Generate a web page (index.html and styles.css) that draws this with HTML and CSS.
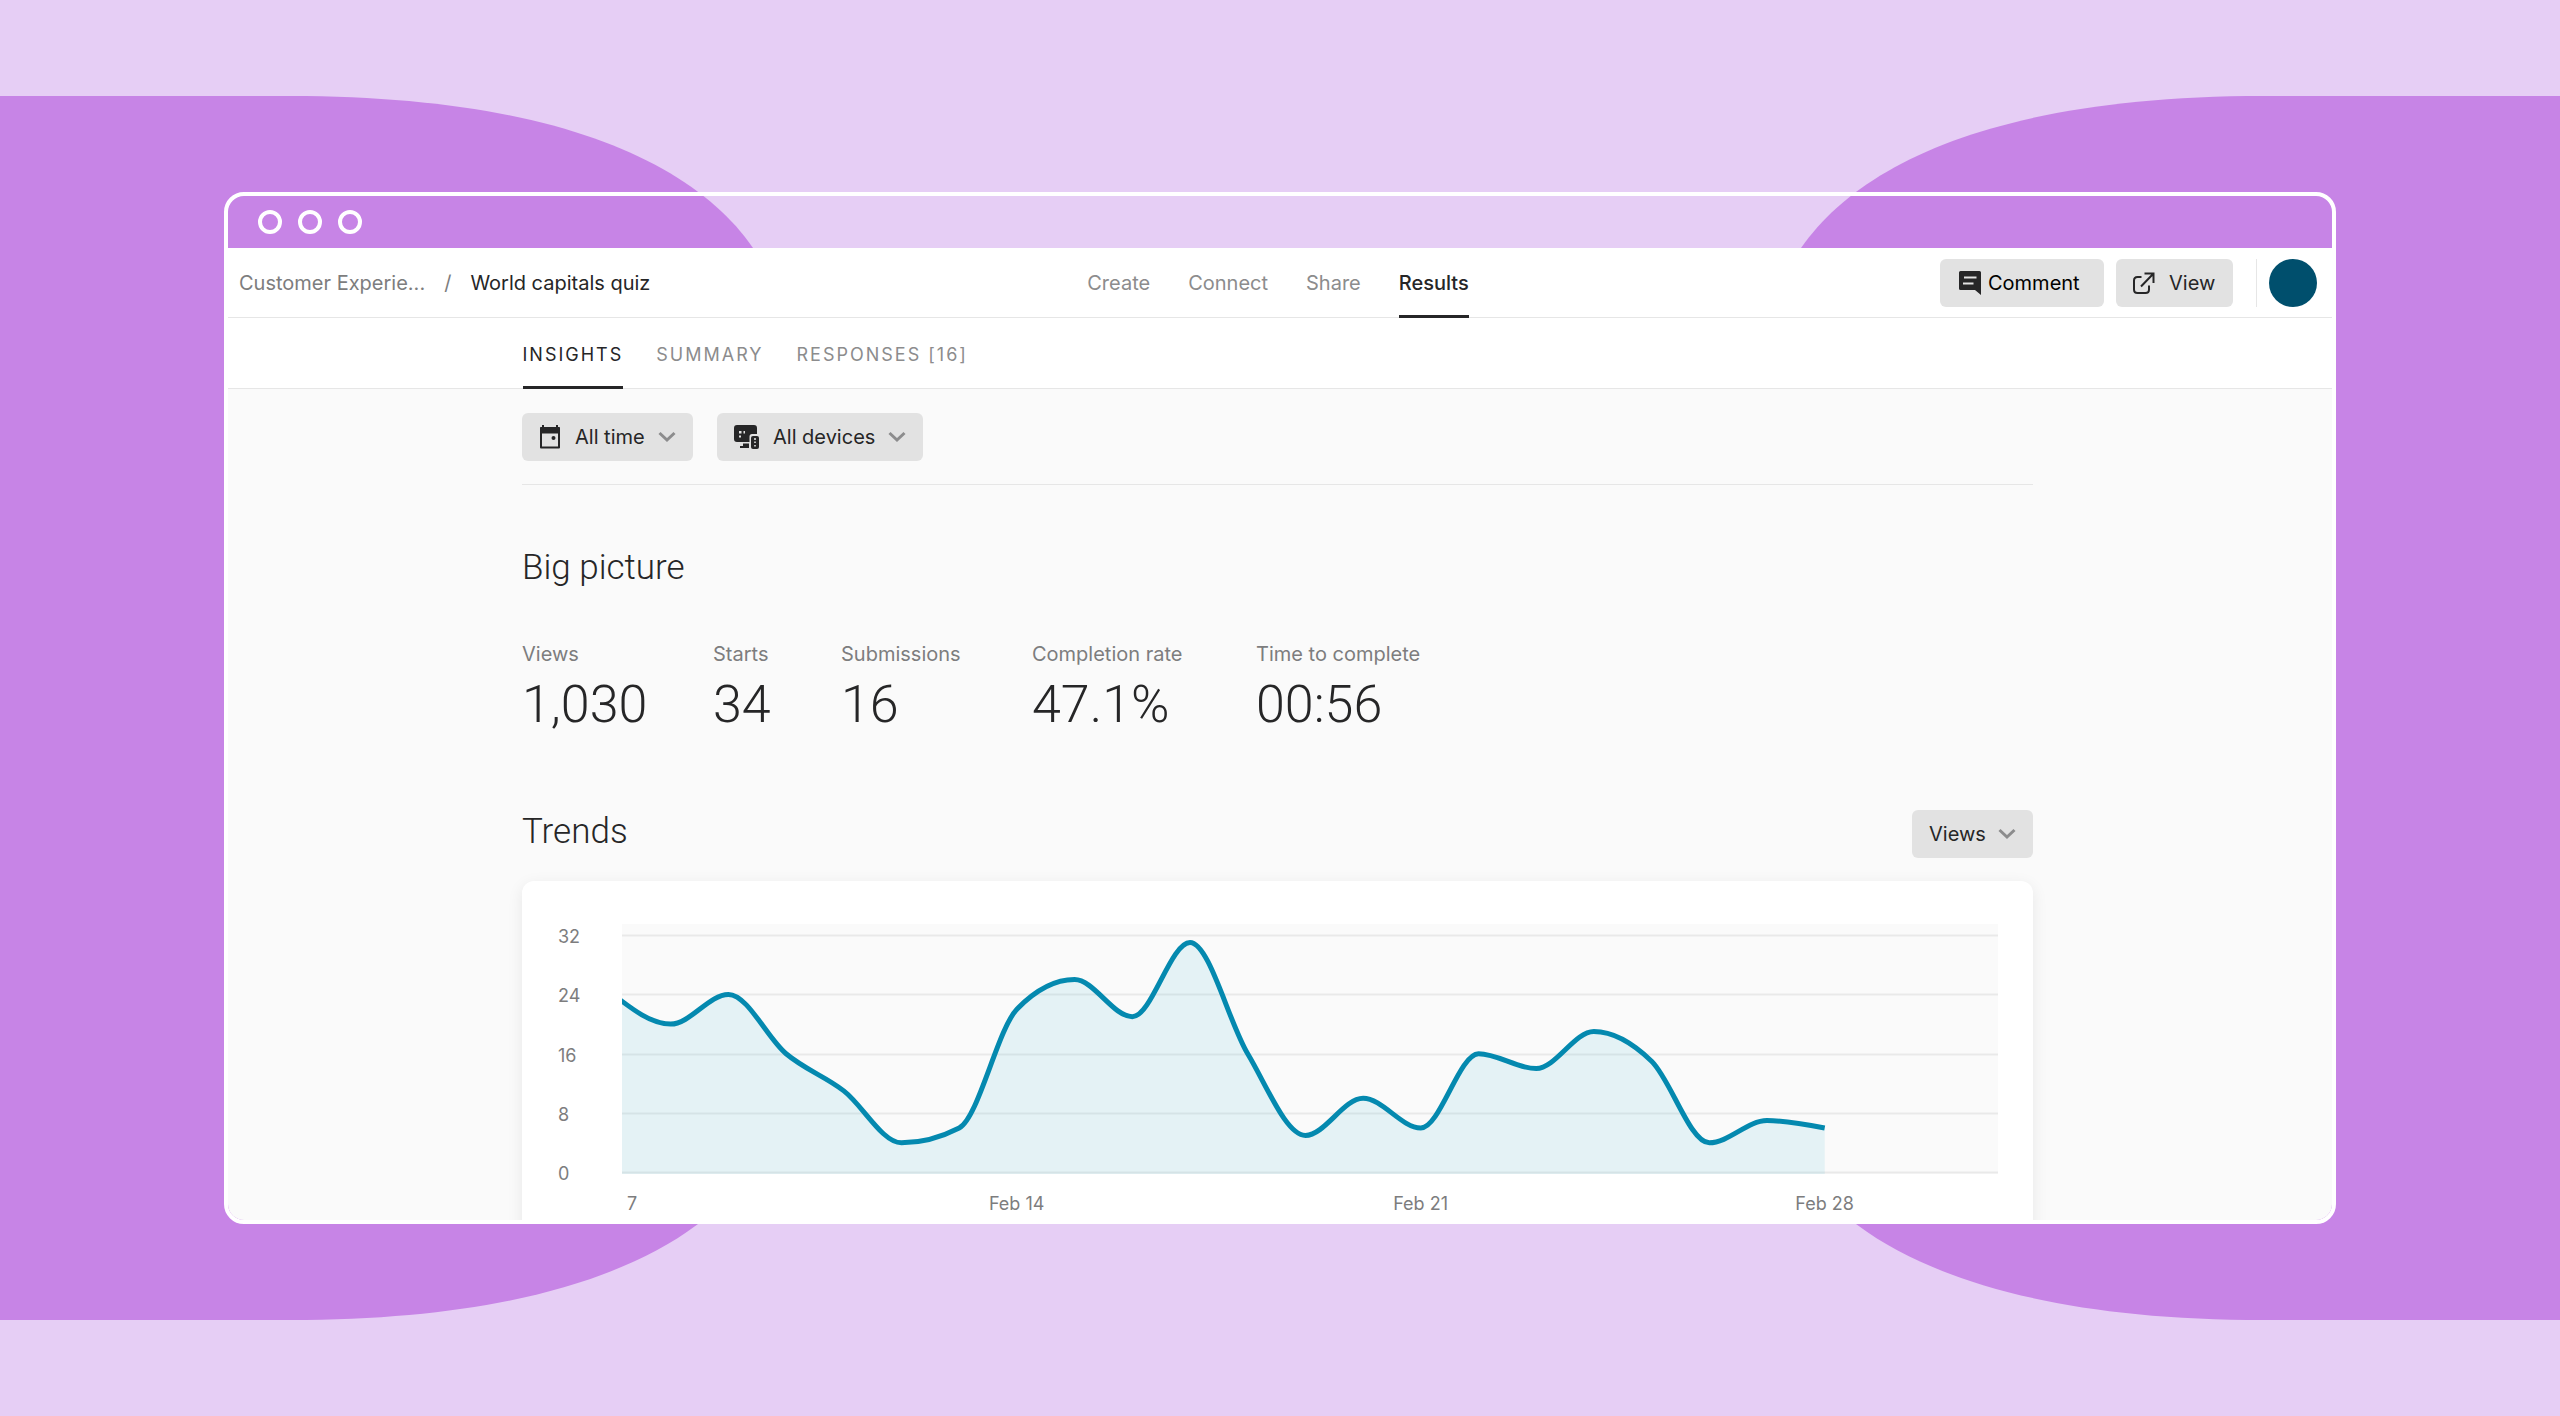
FILE: index.html
```html
<!DOCTYPE html>
<html lang="en">
<head>
<meta charset="utf-8">
<title>World capitals quiz – Results</title>
<link rel="stylesheet" href="styles.css">
</head>
<body>
<div class="stage">
  <svg class="backdrop" viewBox="0 0 2560 1416" preserveAspectRatio="none" aria-hidden="true">
    <path d="M0 96H290C551 96 693 161 753 248C930 505 930 911 753 1168C693 1255 551 1320 290 1320H0Z"/>
    <path d="M2560 96H2264C2003 96 1861 161 1801 248C1624 505 1624 911 1801 1168C1861 1255 2003 1320 2264 1320H2560Z"/>
  </svg>

  <div class="window">
    <div class="titlebar"><i class="dot"></i><i class="dot"></i><i class="dot"></i></div>

    <header class="header">
      <div class="crumbs">
        <a class="crumb" href="#workspace">Customer Experie...</a>
        <span class="slash">/</span>
        <a class="crumb crumb-current" href="#form">World capitals quiz</a>
      </div>
      <nav class="nav">
        <a href="#create">Create</a>
        <a href="#connect">Connect</a>
        <a href="#share">Share</a>
        <a class="active" href="#results">Results</a>
      </nav>
      <div class="actions">
        <button class="button button-comment" type="button">
          <svg width="22" height="24" viewBox="0 0 22 24" aria-hidden="true"><path d="M1.500 0H20.500A1.500 1.500 0 0 1 22 1.500V24L16 19H1.500A1.500 1.500 0 0 1 0 17.500V1.500A1.500 1.500 0 0 1 1.500 0Z" fill="#262627"/><path d="M5 6.500H17.500M4 12.500H14.500" stroke="#e2e2e2" stroke-width="2"/></svg>
          Comment
        </button>
        <button class="button button-view" type="button">
          <svg width="22" height="22" viewBox="0 0 22 22" fill="none" stroke="#262627" stroke-width="2" aria-hidden="true"><path d="M8.500 5H4.500Q1 5 1 8.500V17.500Q1 21 4.500 21H12.500Q16 21 16 17.500V13.500M11.500 1.500H20.500V11M20.500 1.500L8 14.500"/></svg>
          View
        </button>
        <span class="divider"></span>
        <button class="avatar" type="button" aria-label="Account"></button>
      </div>
    </header>

    <div class="tabbar">
      <nav class="tabs">
        <a class="active" href="#insights">INSIGHTS</a>
        <a href="#summary">SUMMARY</a>
        <a href="#responses">RESPONSES [16]</a>
      </nav>
    </div>

    <main class="content">
      <div class="filters">
        <div class="picker picker-time">
          <svg class="picker-icon" width="22" height="24" viewBox="0 0 22 24" aria-hidden="true"><path d="M2 3H20V22.500H2Z" fill="none" stroke="#262627" stroke-width="2" stroke-linejoin="round"/><path d="M1 4Q1 2 3 2H19Q21 2 21 4V8.500H1Z" fill="#262627"/><path d="M4 0V4M18 0V4" stroke="#262627" stroke-width="2"/><circle cx="14.500" cy="13" r="2" fill="#262627"/></svg>
          <select aria-label="Time range"><option>All time</option></select>
          <svg class="chevron" width="18" height="12" viewBox="0 0 18 12" aria-hidden="true"><path d="M1.500 2L9 9L16.500 2"/></svg>
        </div>
        <div class="picker picker-devices">
          <svg class="picker-icon" width="25" height="24" viewBox="0 0 25 24" aria-hidden="true"><path d="M3 0H20Q23 0 23 3V9H18Q15.500 9 15.500 11.500V17H3Q0 17 0 14V3Q0 0 3 0Z" fill="#262627"/><path d="M9 18.500H15V23H6V21H9Z" fill="#262627"/><rect x="17" y="11" width="8" height="13" rx="2" fill="#262627"/><path d="M5 6H7.500V8.500H5ZM9.500 6H11V8.500H9.500ZM5 10.500H7V12.500H5ZM20.200 13H21.800V15H20.200ZM20.200 16.500H21.800V18H20.200ZM20.200 20H21.800V21.500H20.200Z" fill="#e2e2e2"/></svg>
          <select aria-label="Devices"><option>All devices</option></select>
          <svg class="chevron" width="18" height="12" viewBox="0 0 18 12" aria-hidden="true"><path d="M1.500 2L9 9L16.500 2"/></svg>
        </div>
      </div>

      <section>
        <h2 class="heading">Big picture</h2>
        <dl class="stats">
          <div><dt>Views</dt><dd>1,030</dd></div>
          <div><dt>Starts</dt><dd>34</dd></div>
          <div><dt>Submissions</dt><dd>16</dd></div>
          <div><dt>Completion rate</dt><dd>47.1%</dd></div>
          <div><dt>Time to complete</dt><dd>00:56</dd></div>
        </dl>
      </section>

      <section>
        <div class="trends-head">
          <h2 class="heading">Trends</h2>
          <div class="picker picker-metric">
            <select aria-label="Metric"><option>Views</option></select>
            <svg class="chevron" width="18" height="12" viewBox="0 0 18 12" aria-hidden="true"><path d="M1.500 2L9 9L16.500 2"/></svg>
          </div>
        </div>
        <div class="card">
          <div class="y-axis"><span>32</span><span>24</span><span>16</span><span>8</span><span>0</span></div>
          <svg class="plot" viewBox="0 0 1376 250" preserveAspectRatio="none" role="img" aria-label="Views per day">
            <path class="grid-lines" d="M0 11.500H1376M0 70.500H1376M0 130.500H1376M0 189.500H1376M0 248.500H1376"/>
            <path class="area" id="area"/>
            <path class="line" id="line"/>
          </svg>
          <div class="x-axis"><span>7</span><span>Feb 14</span><span>Feb 21</span><span>Feb 28</span></div>
        </div>
      </section>
    </main>
  </div>
</div>
<script src="chart.js"></script>
</body>
</html>
```

FILE: styles.css
```css
* { box-sizing: border-box; }

body {
  margin: 0;
  font-family: Inter, "Liberation Sans", sans-serif;
  font-size: 20px;
  line-height: 24px;
  color: #262627;
  background: #e6cef5;
}

a { color: inherit; text-decoration: none; }

.stage {
  position: relative;
  height: 100vh;
  min-height: 700px;
  padding: 192px 224px;
}

.backdrop {
  position: absolute;
  inset: 0;
  width: 100%;
  height: 100%;
  fill: #c784e6;
}

.window {
  position: relative;
  display: flex;
  flex-direction: column;
  height: 100%;
  overflow: hidden;
  border: 4px solid #fff;
  border-radius: 20px;
}

.titlebar {
  flex: none;
  display: flex;
  align-items: center;
  gap: 16px;
  height: 52px;
  padding-left: 30px;
}

.dot {
  width: 24px;
  height: 24px;
  border: 4px solid #fff;
  border-radius: 50%;
}

.header {
  flex: none;
  display: grid;
  grid-template-columns: 1fr auto 1fr;
  height: 70px;
  padding: 0 15px 0 11px;
  background: #fff;
  border-bottom: 1px solid #e6e6e6;
}

.crumbs { display: flex; align-items: center; gap: 19px; color: #7d7d7e; }
.crumb-current { color: #262627; }

.nav { display: flex; gap: 38px; color: #8c8c8d; }

.nav a,
.tabs a {
  display: flex;
  align-items: center;
  margin-bottom: -1px;
  border-top: 3px solid transparent;
  border-bottom: 3px solid transparent;
}

.nav a.active,
.tabs a.active { color: #262627; border-bottom-color: #262627; }
.nav a.active { font-weight: 500; }

.actions { display: flex; align-items: center; justify-content: flex-end; }

.button {
  display: flex;
  align-items: center;
  height: 48px;
  border: 0;
  border-radius: 6px;
  background: #e2e2e2;
  color: #262627;
  font: inherit;
}

.button-comment { width: 164px; padding: 0 0 0 19px; gap: 7px; color: #000; }
.button-view { width: 117px; padding: 0 0 0 17px; gap: 14px; margin-left: 12px; }

.divider { width: 1px; height: 48px; margin: 0 12px 0 23px; background: #e6e6e6; }

.avatar { width: 48px; height: 48px; padding: 0; border: 0; border-radius: 50%; background: #004f6d; }

.tabbar {
  flex: none;
  height: 71px;
  padding-right: 4px;
  background: #fff;
  border-bottom: 1px solid #e6e6e6;
}

.tabs {
  display: flex;
  gap: 33px;
  max-width: 1511px;
  height: 70px;
  margin: 0 auto;
  font-size: 18px;
  letter-spacing: 2px;
  color: #8c8c8d;
}
.tabs a { padding-top: 2px; }

.content {
  flex: 1;
  min-height: 0;
  overflow: hidden;
  padding-right: 5px;
  background: #fafafa;
}

.filters,
.content section { max-width: 1511px; margin: 0 auto; }

.filters {
  display: flex;
  gap: 24px;
  padding: 24px 0 23px;
  border-bottom: 1px solid #e6e6e6;
}

.picker { display: grid; align-items: center; height: 48px; }
.picker > * { grid-area: 1 / 1; }

.picker select {
  appearance: none;
  width: 100%;
  height: 100%;
  padding: 0 0 0 17px;
  border: 0;
  border-radius: 6px;
  background: #e2e2e2;
  color: #262627;
  font: inherit;
}

.picker-time { width: 171px; }
.picker-devices { width: 206px; }
.picker-metric { width: 121px; }
.picker-time select { padding-left: 53px; }
.picker-devices select { padding-left: 56px; }

.picker-icon,
.chevron { z-index: 1; pointer-events: none; }
.picker-icon { margin-left: 17px; }
.chevron {
  justify-self: end;
  margin-right: 17px;
  fill: none;
  stroke: #8c8c8d;
  stroke-width: 3;
}

.heading {
  margin: 0;
  font-family: Roboto, Lato, sans-serif;
  font-size: 35px;
  font-weight: 300;
  line-height: 44px;
}

.filters + section { padding-top: 61px; }

.stats {
  display: grid;
  grid-template-columns: 191px 128px 191px 224px auto;
  margin: 52px 0 76px;
}
.stats dt { color: #7d7d7e; }
.stats dd {
  margin: 10px 0 0;
  font-family: Roboto, Lato, sans-serif;
  font-size: 52px;
  font-weight: 300;
  line-height: 58px;
}

.trends-head {
  display: flex;
  justify-content: space-between;
  margin-bottom: 23px;
}

.card {
  display: grid;
  grid-template-columns: 64px 1fr;
  padding: 43px 35px 40px 36px;
  border-radius: 12px;
  background: #fff;
  box-shadow: 0 4px 16px rgba(0, 0, 0, 0.08);
  font-size: 18px;
  line-height: 20px;
  color: #7d7d7e;
}

.y-axis {
  display: flex;
  flex-direction: column;
  justify-content: space-between;
  height: 257px;
  margin-top: 3px;
}

.plot { width: 100%; height: 250px; background: #fafafa; }
.plot path { vector-effect: non-scaling-stroke; }
.grid-lines { stroke: #e9e9e9; stroke-width: 2; }
.area { fill: rgba(40, 180, 210, 0.1); }
.line { fill: none; stroke: #0489af; stroke-width: 5; }

.x-axis { grid-column: 2; display: flex; min-width: 0; margin-top: 10px; }
.x-axis span { flex: none; width: 29.36%; text-align: center; }
.x-axis span:first-child { width: 14%; padding-left: 5px; text-align: left; }
```

FILE: chart.js
```js
// Daily views, Feb 7 to Feb 28, drawn as a monotone cubic curve.
const views = [24, 20, 24, 16, 11, 4, 6, 22, 26, 21, 31, 16, 5, 10, 6, 16, 14, 19, 15, 4, 7, 6];
const STEP = 57.7;
const START = -9;
const BASE = 248.5;
const UNIT = 7.42;

const points = views.map((v, i) => [START + i * STEP, BASE - v * UNIT]);
const slopes = points.slice(1).map((p, i) => (p[1] - points[i][1]) / STEP);

const tangents = points.map((p, i) => {
  if (i === 0 || i === points.length - 1) return null;
  const a = slopes[i - 1];
  const b = slopes[i];
  if (a * b <= 0) return 0;
  return Math.sign(a) * 2 * Math.min(Math.abs(a), Math.abs(b), Math.abs(a + b) / 4);
});
const last = points.length - 1;
tangents[0] = (3 * slopes[0] - tangents[1]) / 2;
tangents[last] = (3 * slopes[last - 1] - tangents[last - 1]) / 2;

let d = `M${points[0]}`;
for (let i = 0; i < last; i++) {
  const [x0, y0] = points[i];
  const [x1, y1] = points[i + 1];
  const h = STEP / 3;
  d += `C${x0 + h},${y0 + h * tangents[i]},${x1 - h},${y1 - h * tangents[i + 1]},${x1},${y1}`;
}

document.getElementById('line').setAttribute('d', d);
document.getElementById('area').setAttribute('d', `${d}V250H${START}Z`);
```
